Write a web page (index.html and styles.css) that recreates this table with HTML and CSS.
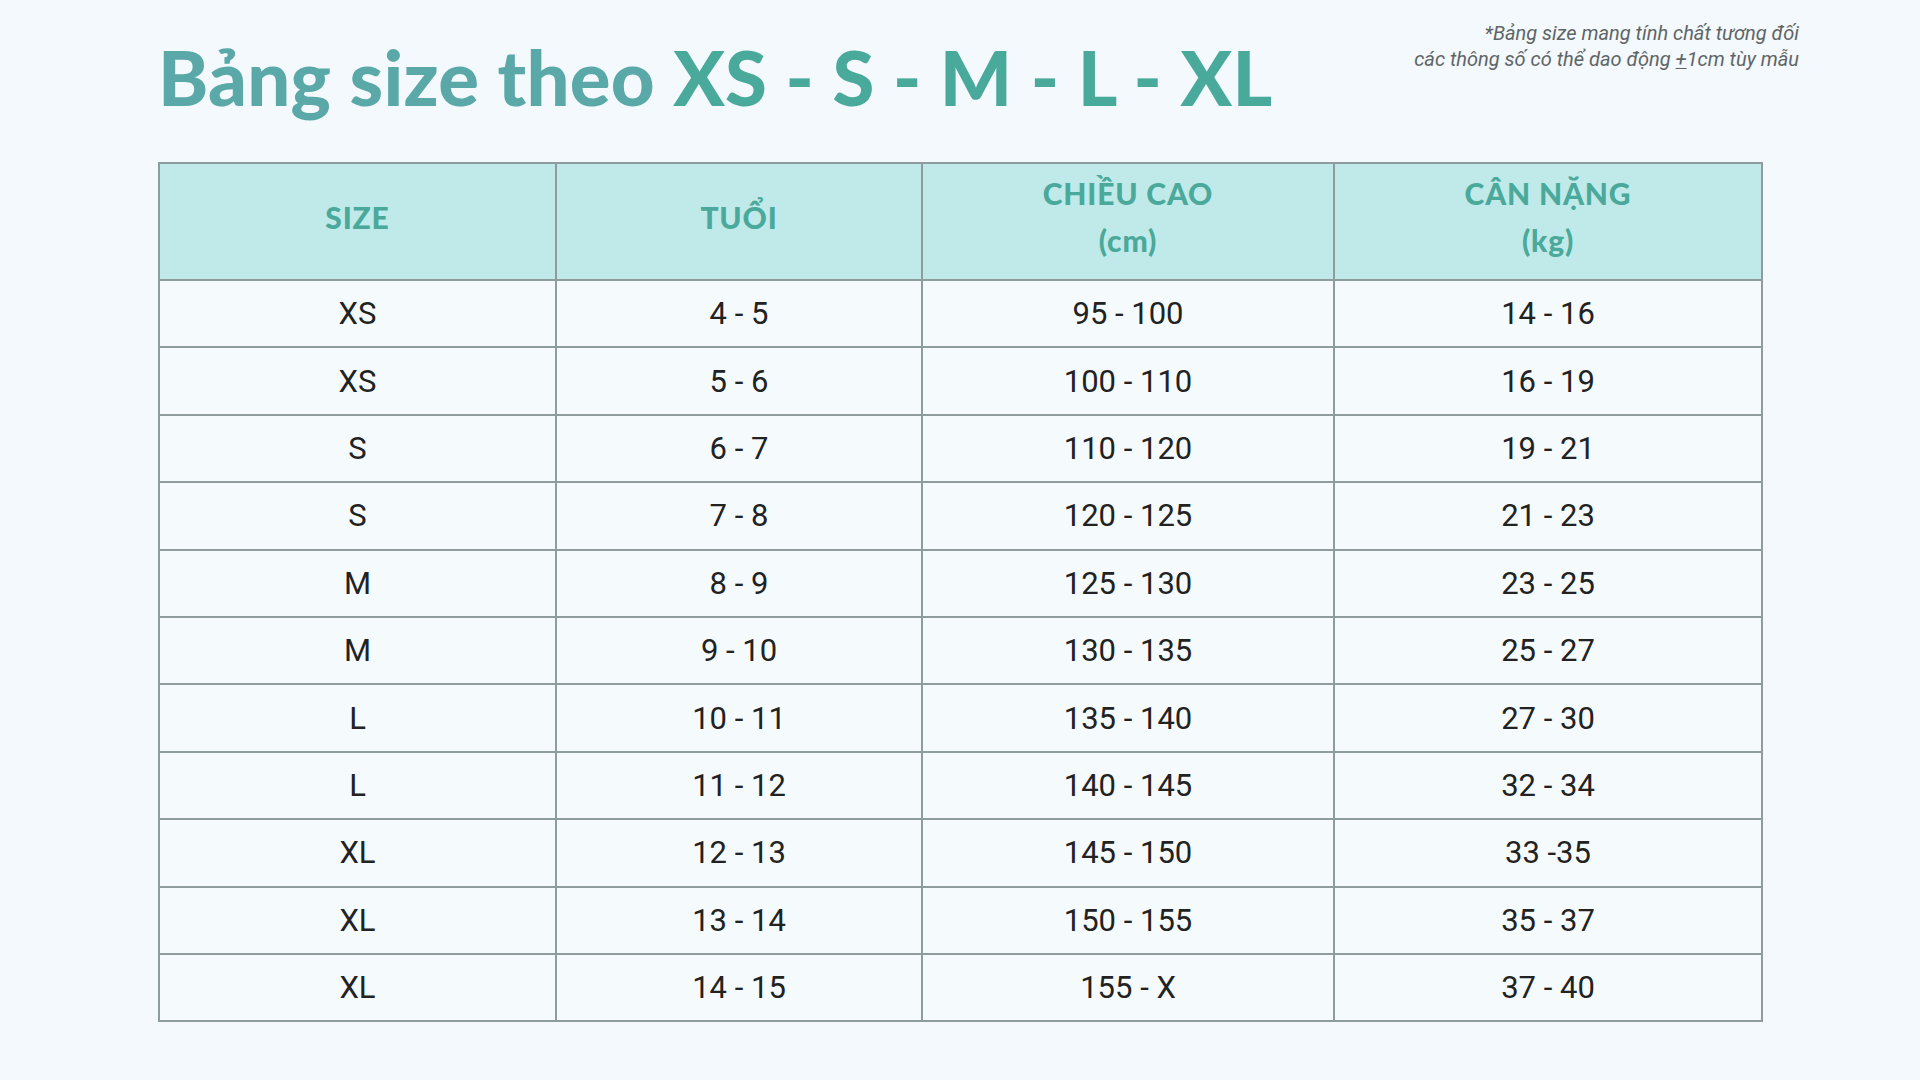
FILE: index.html
```html
<!DOCTYPE html>
<html lang="vi">
<head>
<meta charset="utf-8">
<title>Bảng size</title>
<link rel="stylesheet" href="styles.css">
</head>
<body>
<div class="page">
  <header class="top">
    <h1 class="title"><span class="title-a">Bảng size theo</span> <span class="title-b">XS - S - M - L - XL</span></h1>
    <p class="note">*Bảng size mang tính chất tương đối<br>các thông số có thể dao động <u>+</u>1cm tùy mẫu</p>
  </header>
  <table class="sizes">
    <colgroup>
      <col class="c1"><col class="c2"><col class="c3"><col class="c4">
    </colgroup>
    <thead>
      <tr><th>SIZE</th><th>TUỔI</th><th>CHIỀU CAO<br>(cm)</th><th>CÂN NẶNG<br>(kg)</th></tr>
    </thead>
    <tbody>
      <tr><td>XS</td><td>4 - 5</td><td>95 - 100</td><td>14 - 16</td></tr>
      <tr><td>XS</td><td>5 - 6</td><td>100 - 110</td><td>16 - 19</td></tr>
      <tr><td>S</td><td>6 - 7</td><td>110 - 120</td><td>19 - 21</td></tr>
      <tr><td>S</td><td>7 - 8</td><td>120 - 125</td><td>21 - 23</td></tr>
      <tr><td>M</td><td>8 - 9</td><td>125 - 130</td><td>23 - 25</td></tr>
      <tr><td>M</td><td>9 - 10</td><td>130 - 135</td><td>25 - 27</td></tr>
      <tr><td>L</td><td>10 - 11</td><td>135 - 140</td><td>27 - 30</td></tr>
      <tr><td>L</td><td>11 - 12</td><td>140 - 145</td><td>32 - 34</td></tr>
      <tr><td>XL</td><td>12 - 13</td><td>145 - 150</td><td>33 -35</td></tr>
      <tr><td>XL</td><td>13 - 14</td><td>150 - 155</td><td>35 - 37</td></tr>
      <tr><td>XL</td><td>14 - 15</td><td>155 - X</td><td>37 - 40</td></tr>
    </tbody>
  </table>
</div>
</body>
</html>
```

FILE: styles.css
```css
html, body {
  margin: 0;
  padding: 0;
  background: #f3f9fc;
}
.page {
  width: 1920px;
  height: 1080px;
  box-sizing: border-box;
  padding: 0 121px 0 158px;
  display: flex;
  flex-direction: column;
}
.top {
  display: flex;
  justify-content: space-between;
  align-items: flex-start;
  height: 162px;
}
.title {
  margin: 39px 0 0 0;
  font-family: Lato, "Noto Sans", sans-serif;
  font-weight: 900;
  font-size: 76px;
  line-height: 76px;
  letter-spacing: 0.25px;
  white-space: nowrap;
}
.title-a { color: #5aa9a8; }
.title-b { color: #49aa9b; }
.note {
  margin: 20px 0 0 0;
  font-family: Roboto, "Liberation Sans", sans-serif;
  font-style: italic;
  font-size: 20px;
  line-height: 26px;
  color: #5f6566;
  text-align: right;
}
.note u {
  text-decoration-thickness: 1px;
  text-underline-offset: 2px;
}
.sizes {
  border-collapse: collapse;
  width: 1603px;
  table-layout: fixed;
}
.c1 { width: 397px; }
.c2 { width: 366px; }
.c3 { width: 412px; }
.c4 { width: 428px; }
.sizes th, .sizes td {
  border: 2px solid #8e9c9d;
  text-align: center;
  padding: 0;
}
.sizes th {
  background: #c0e9e9;
  color: #4aa99b;
  font-family: Lato, "Noto Sans", sans-serif;
  font-weight: 900;
  font-size: 30px;
  letter-spacing: 0.8px;
  line-height: 47px;
  height: 106px;
  padding-bottom: 9px;
}
.sizes td {
  background: #f5fbfd;
  color: #222;
  font-family: Roboto, "Liberation Sans", sans-serif;
  font-size: 31px;
  height: 65.4px;
}
```
